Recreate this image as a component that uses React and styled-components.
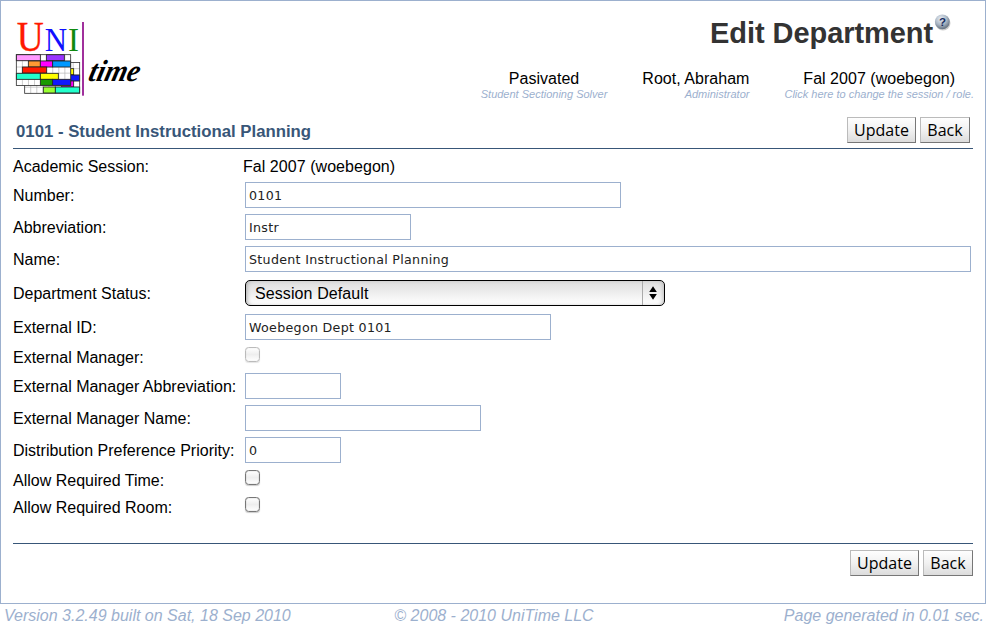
import React from "react";
import styled, { createGlobalStyle } from "styled-components";

const Global = createGlobalStyle`
  *, *::before, *::after { box-sizing: border-box; }
  body { margin: 0; background: #fff; color: #000; font: 16px/20px "Liberation Sans", Arial, sans-serif; }
`;
const Page = styled.div`height: 634px; display: flex; flex-direction: column; overflow: hidden;`;
const Frame = styled.main`
  height: 604px; border: 1px solid #9cb0ce; padding: 0 12px; display: flex; flex-direction: column;
`;
const Header = styled.header`height: 111px; display: flex; justify-content: space-between;`;
const Logo = styled.svg`display: block; width: 160px; height: 100px; margin: 9px 0 0 -13px;`;
const HeaderRight = styled.div`display: flex; flex-direction: column; align-items: flex-end; margin-right: -2px;`;
const TitleBar = styled.div`display: flex; height: 68px; padding: 12px 24px 0 0;`;
const Title = styled.h1`margin: 4px 0 0; font-size: 29px; line-height: 32px; font-weight: bold; color: #333; letter-spacing: -0.07px;`;
const Help = styled.svg`width: 18px; height: 18px; display: block;`;
const InfoBar = styled.div`display: flex; gap: 35px; padding-right: 1px;`;
const Info = styled.div`display: flex; flex-direction: column; align-items: ${(p) => p.$align || "center"};`;
const InfoMain = styled.div`line-height: 20px; letter-spacing: 0.03px;`;
const InfoSub = styled.div`
  font-size: 11px; line-height: 12px; margin-top: -1px; font-style: italic; color: #9cb0ce; white-space: nowrap;
`;
const Section = styled.div`
  height: 37px; border-bottom: 1px solid #385678; display: flex; justify-content: space-between;
  padding: 5px 3px 0;
`;
const SectionTitle = styled.h2`margin: 0; font-size: 16.75px; line-height: 29px; color: #385678; font-weight: bold;`;
const Buttons = styled.div`display: flex; gap: 4px; justify-content: flex-end;`;
const Button = styled.button`
  width: ${(p) => p.$w}px; height: 26px; padding: 0; border: 1px solid; border-color: #bbb #777 #777 #bbb;
  background: linear-gradient(#fefefe, #f1f1f1 50%, #dcdcdc); color: #000;
  font: 500 16px/22px "Open Sans", "Noto Sans", sans-serif;
`;
const Form = styled.form`padding-top: 4px; flex: 1;`;
const Row = styled.div`display: grid; grid-template-columns: 230px 1fr; height: ${(p) => p.$h || 32}px; align-items: center;`;
const Label = styled.label`white-space: nowrap; padding-top: 2px;`;
const Value = styled.span`padding-top: 2px; letter-spacing: 0.05px;`;
const Input = styled.input`
  display: block; width: ${(p) => p.$w}px; height: 26px; margin-left: 2px; padding: 1px 3px 0; outline: 0;
  border: 1px solid #9cb0ce; border-radius: 0; background: #fff; color: #222; letter-spacing: 0.3px;
  font: 12.65px "DejaVu Sans", Verdana, sans-serif;
`;
const Select = styled.button`
  display: flex; align-items: center; justify-content: space-between; width: 420px; height: 26px; margin-left: 2px;
  padding: 0 0 0 9px; border: 1px solid #000; border-radius: 5px; color: #000;
  background: linear-gradient(#dedede, #e9e9e9 35%, #f2f2f2 60%, #fff);
  box-shadow: inset 3px 0 4px -2px #aaa, inset -3px 0 4px -2px #bbb;
  font: 16px "Liberation Sans", Arial, sans-serif;
`;
const SelectText = styled.span`padding-top: 1px; letter-spacing: 0.1px;`;
const Arrows = styled.svg`width: 22px; height: 24px; border-left: 1px solid #aaa;`;
const Check = styled.input`
  appearance: none; width: 15px; height: 15px; margin: -4px 0 0 2px; border: 1.5px solid #777; border-radius: 3.5px;
  background: linear-gradient(#fff, #eee 50%, #fff); box-shadow: 0 1px 1px #ccc, inset 0 0 1px #777;
  &:disabled { border-color: #bbb; box-shadow: 0 1px 1px #e5e5e5, inset 0 0 1px #ccc; }
`;
const Bottom = styled.div`height: 60px; border-top: 1px solid #385678; padding-top: 6px;`;
const Footer = styled.footer`
  display: grid; grid-template-columns: 1fr auto 1fr; height: 30px; padding: 1px 2px 0 4px;
  color: #9cb0ce; font-style: italic; line-height: 22px;
  > :last-child { text-align: right; }
`;

const backBars = [
  [212, 176, 9, "#ff0"], [212, 195, 27, "#1018ff"], [185, 213, 36, "#f0f"],
  [130, 231, 36, "#9f3"], [166, 231, 73, "#2fc"],
];
const frontBars = [
  [49, 134, 72, "#f9f"], [139, 134, 54, "#93f"],
  [85, 153, 36, "#f93"], [121, 153, 37, "#f0f"], [158, 153, 54, "#09f"],
  [67, 171, 73, "#ff1a00"], [49, 190, 72, "#2fc"], [121, 190, 54, "#ff0"],
  [121, 208, 37, "#199a00"], [158, 208, 54, "#1018ff"],
];

function Timetable({ x, y, bars, w }) {
  return (
    <g>
      <rect x={x} y={y} width={w} height="92.5" fill="#fff" />
      <path
        d={Array.from({ length: 8 }, (_, i) => `M${x + (i + 1) * 18.2} ${y}v92.5`).join("") +
          Array.from({ length: 4 }, (_, i) => `M${x} ${y + (i + 1) * 18.5}h${w}`).join("")}
        stroke="#b4b4b4" strokeWidth="2" fill="none"
      />
      {bars.map(([bx, by, bw, c]) => (
        <rect key={`${bx}-${by}`} x={bx} y={by} width={bw} height="18" fill={c} stroke="#222" strokeWidth="2.5" />
      ))}
      <rect x={x} y={y} width={w} height="92.5" fill="none" stroke="#333" strokeWidth="2.5" />
    </g>
  );
}

function UniTimeLogo() {
  return (
    <Logo viewBox="0 0 480 300">
      <g fontFamily="Liberation Serif, Times New Roman, serif">
        <text x="50" y="122" fontSize="124" fill="#ff1a00" stroke="#ff1a00" strokeWidth="1" textLength="81" lengthAdjust="spacingAndGlyphs">U</text>
        <text x="134" y="122" fontSize="99" fill="#1010ff" textLength="67" lengthAdjust="spacingAndGlyphs">N</text>
        <text x="204" y="122" fontSize="99" fill="#108a10">I</text>
        <text
          transform="translate(262 213) skewX(-14)" fontSize="92" fontWeight="bold" fontStyle="italic"
          textLength="152" lengthAdjust="spacingAndGlyphs"
        >time</text>
      </g>
      <Timetable x={74} y={157.5} w={165} bars={backBars} />
      <Timetable x={49} y={134} w={163} bars={frontBars} />
      <rect x="246" y="36" width="6" height="221" fill="#a0309c" />
    </Logo>
  );
}

function HelpIcon() {
  return (
    <Help viewBox="0 0 18 18">
      <defs>
        <radialGradient id="orb" cx=".4" cy=".3" r=".75">
          <stop offset="0" stopColor="#e8eef5" />
          <stop offset=".55" stopColor="#a9b5c3" />
          <stop offset="1" stopColor="#596675" />
        </radialGradient>
      </defs>
      <circle cx="10" cy="10" r="7.5" fill="#999" opacity=".5" />
      <circle cx="9.3" cy="8.8" r="7.4" fill="url(#orb)" />
      <text x="9.4" y="13" fontFamily="Liberation Sans, Arial, sans-serif" fontWeight="bold" fontSize="11.5" textAnchor="middle" fill="#172c60">?</text>
    </Help>
  );
}

function Field({ label, h, w, value = "" }) {
  return (
    <Row $h={h}>
      <Label>{label}</Label>
      <Input $w={w} defaultValue={value} />
    </Row>
  );
}

function CheckField({ label, disabled }) {
  return (
    <Row $h={27}>
      <Label>{label}</Label>
      <Check type="checkbox" disabled={disabled} />
    </Row>
  );
}

function Actions() {
  return (
    <Buttons>
      <Button type="button" $w={69}>Update</Button>
      <Button type="button" $w={50}>Back</Button>
    </Buttons>
  );
}

export default function App() {
  return (
    <Page>
      <Global />
      <Frame>
        <Header>
          <UniTimeLogo />
          <HeaderRight>
            <TitleBar>
              <Title>Edit Department</Title>
              <HelpIcon />
            </TitleBar>
            <InfoBar>
              <Info>
                <InfoMain>Pasivated</InfoMain>
                <InfoSub>Student Sectioning Solver</InfoSub>
              </Info>
              <Info $align="flex-end">
                <InfoMain>Root, Abraham</InfoMain>
                <InfoSub>Administrator</InfoSub>
              </Info>
              <Info>
                <InfoMain>Fal 2007 (woebegon)</InfoMain>
                <InfoSub>Click here to change the session / role.</InfoSub>
              </Info>
            </InfoBar>
          </HeaderRight>
        </Header>
        <Section>
          <SectionTitle>0101 - Student Instructional Planning</SectionTitle>
          <Actions />
        </Section>
        <Form>
          <Row $h={26}>
            <Label>Academic Session:</Label>
            <Value>Fal 2007 (woebegon)</Value>
          </Row>
          <Field label="Number:" w={376} value="0101" />
          <Field label="Abbreviation:" w={166} value="Instr" />
          <Field label="Name:" w={726} value="Student Instructional Planning" />
          <Row $h={36}>
            <Label>Department Status:</Label>
            <Select type="button">
              <SelectText>Session Default</SelectText>
              <Arrows viewBox="0 0 22 24">
                <path d="M10.5 5l4 6H6.5zM10.5 19l4-6H6.5z" fill="#000" />
              </Arrows>
            </Select>
          </Row>
          <Field label="External ID:" w={306} value="Woebegon Dept 0101" />
          <CheckField label="External Manager:" disabled />
          <Field label="External Manager Abbreviation:" w={96} />
          <Field label="External Manager Name:" w={236} />
          <Field label="Distribution Preference Priority:" w={96} value="0" />
          <CheckField label="Allow Required Time:" />
          <CheckField label="Allow Required Room:" />
        </Form>
        <Bottom>
          <Actions />
        </Bottom>
      </Frame>
      <Footer>
        <span>Version 3.2.49 built on Sat, 18 Sep 2010</span>
        <span>© 2008 - 2010 UniTime LLC</span>
        <span>Page generated in 0.01 sec.</span>
      </Footer>
    </Page>
  );
}
